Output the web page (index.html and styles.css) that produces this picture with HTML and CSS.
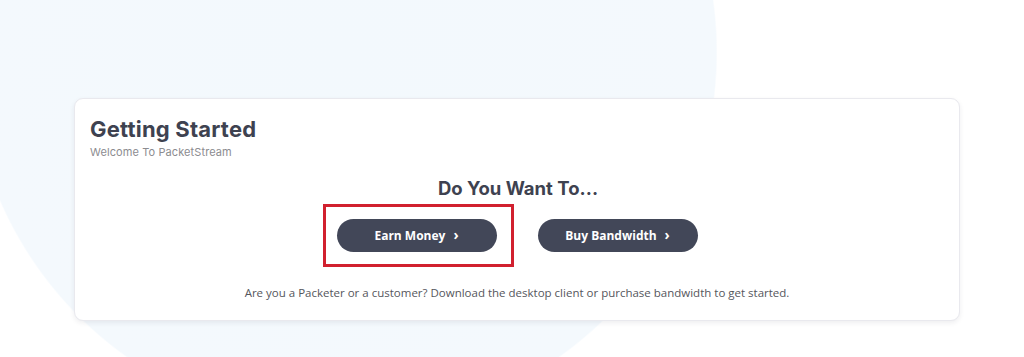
FILE: index.html
```html
<!DOCTYPE html>
<html lang="en">
<head>
<meta charset="utf-8">
<title>Getting Started</title>
<link rel="stylesheet" href="styles.css">
</head>
<body>
<main class="page">
  <section class="card">
    <header class="card-head">
      <h1 class="title">Getting Started</h1>
      <p class="subtitle">Welcome To PacketStream</p>
    </header>
    <div class="choice">
      <h2 class="question">Do You Want To...</h2>
      <div class="actions">
        <a class="btn btn-marked" href="#">Earn Money <span class="chev">›</span></a>
        <a class="btn" href="#">Buy Bandwidth <span class="chev">›</span></a>
      </div>
      <p class="hint">Are you a Packeter or a customer? Download the desktop client or purchase bandwidth to get started.</p>
    </div>
  </section>
</main>
</body>
</html>
```
FILE: styles.css
```css
html, body {
  margin: 0;
  padding: 0;
}
body {
  width: 1024px;
  height: 357px;
  overflow: hidden;
  background: radial-gradient(circle 374px at 343px 52px, #f3f9fd 0, #f4f9fd 373px, #ffffff 374.5px);
  font-family: "Open Sans", "Liberation Sans", sans-serif;
}
.page {
  padding: 98px 64px 0 74px;
}
.card {
  box-sizing: border-box;
  width: 886px;
  height: 223px;
  background: #ffffff;
  border: 1px solid #e9e9ee;
  border-radius: 9px;
  box-shadow: 0 2px 5px rgba(40, 40, 60, 0.08);
  padding: 17px 15px 0 15px;
}
.title {
  margin: 0;
  font-family: Inter, "Noto Sans", sans-serif;
  font-weight: 700;
  font-size: 22px;
  line-height: 26px;
  letter-spacing: 0.2px;
  color: #3e4250;
}
.subtitle {
  margin: 4px 0 0 0;
  font-family: Inter, "Noto Sans", sans-serif;
  font-size: 11px;
  line-height: 12px;
  letter-spacing: 0.1px;
  color: #8c8c90;
}
.choice {
  display: flex;
  flex-direction: column;
  align-items: center;
  padding-top: 19px;
}
.question {
  margin: 0 0 0 2px;
  font-family: Inter, "Noto Sans", sans-serif;
  font-weight: 700;
  font-size: 18.5px;
  line-height: 22px;
  color: #3e4250;
}
.actions {
  display: flex;
  gap: 41px;
  margin-top: 20px;
}
.btn {
  position: relative;
  display: flex;
  align-items: center;
  justify-content: center;
  width: 160px;
  height: 33px;
  border-radius: 17px;
  background: #424758;
  color: #ffffff;
  text-decoration: none;
  font-weight: 700;
  font-size: 12px;
}
.chev {
  margin-left: 8px;
  font-size: 14px;
  line-height: 1;
  position: relative;
  top: -1px;
}
.btn-marked::after {
  content: "";
  position: absolute;
  top: -15px;
  bottom: -15px;
  left: -14px;
  right: -17px;
  border: 3px solid #d1202f;
}
.hint {
  margin: 34px 0 0 0;
  font-size: 11.5px;
  line-height: 14px;
  color: #55565c;
}
```
